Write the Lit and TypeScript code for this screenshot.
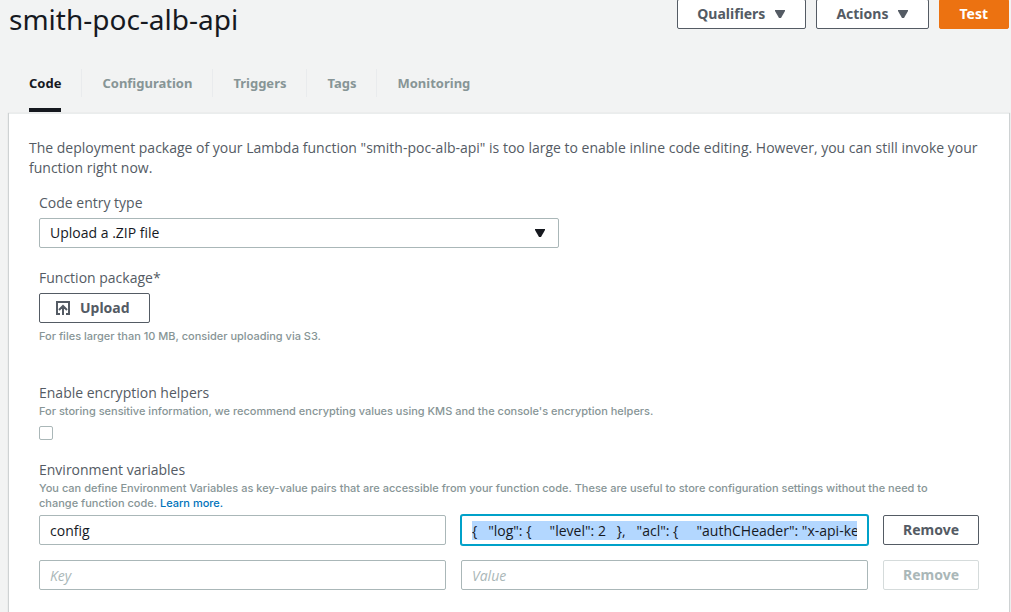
import { LitElement, html, css } from "lit";
import { customElement, state } from "lit/decorators.js";

interface Variable {
  key: string;
  value: string;
}

const caret = html`<svg class="caret" viewBox="0 0 10 8" aria-hidden="true"><path d="M0 0h10v1L6 8H4L0 1z" fill="currentColor"/></svg>`;

@customElement("app-root")
export class AppRoot extends LitElement {
  @state() private tabs = ["Code", "Configuration", "Triggers", "Tags", "Monitoring"];
  @state() private current = "Code";
  @state() private variables: Variable[] = [
    {
      key: "config",
      value: '{   "log": {     "level": 2   },   "acl": {     "authCHeader": "x-api-key"   } }',
    },
    { key: "", value: "" },
  ];

  static styles = css`
    :host {
      display: flex;
      flex-direction: column;
      min-height: 100vh;
      overflow: hidden;
      background: #f2f3f3;
      color: #545b64;
      font: 14px/20px "Open Sans", "Noto Sans", sans-serif;
    }
    * { box-sizing: border-box; }
    header {
      display: flex;
      justify-content: space-between;
      align-items: center;
      margin-top: -1px;
      padding: 0 2px 0 9px;
    }
    h1 {
      margin: 0;
      font: 400 28px/40px "Noto Sans", sans-serif;
      color: #16191f;
    }
    .actions { display: flex; gap: 10px; align-self: flex-start; }
    button {
      font: 700 14px/20px "Noto Sans", sans-serif;
      height: 30px;
      padding: 0 19px;
      border: 1px solid #545b64;
      border-radius: 2px;
      background: #fff;
      color: #545b64;
      display: inline-flex;
      align-items: center;
      justify-content: center;
      gap: 10px;
      white-space: nowrap;
    }
    .actions button { padding: 0 20px 0 19px; }
    button.primary { background: #ec7211; border-color: #ec7211; color: #fff; }
    button:disabled { color: #aab7b8; border-color: #d5dbdb; }
    .caret { width: 10px; height: 8px; }
    nav {
      display: flex;
      margin-top: 30px;
      padding: 0 9px;
      font: 700 13px/20px "Noto Sans", sans-serif;
    }
    .tab { height: 43px; display: flex; }
    .tab a {
      margin: 0 20px;
      padding-top: 4px;
      color: #879596;
      text-decoration: none;
      border-bottom: 4px solid transparent;
    }
    .tab + .tab::before { content: ""; width: 1px; height: 28px; background: #e9ebed; }
    .tab a.on { color: #16191f; border-color: #16191f; }
    main {
      flex: 1;
      margin: 2px 2px 0 9px;
      padding: 24px 20px;
      background: #fff;
      box-shadow: 0 -1px 0 #eaeded, 0 0 1px 1px rgba(0, 28, 36, 0.15);
    }
    p { margin: 0; }
    form { padding: 15px 10px; display: flex; flex-direction: column; }
    label, .label { display: block; }
    .field { display: flex; flex-direction: column; align-items: flex-start; }
    .hint {
      max-width: 930px;
      padding-top: 1px;
      margin-bottom: -1px;
      font: 500 11px/15px Inter, "Noto Sans", sans-serif;
      color: #879596;
    }
    .hint a { color: #0073bb; text-decoration: none; }
    .pick { display: grid; width: 100%; max-width: 520px; align-items: center; margin: 5px 0 20px; }
    .pick > * { grid-area: 1 / 1; }
    .pick .caret { justify-self: end; margin-right: 14px; color: #16191f; pointer-events: none; }
    select, input {
      font: inherit;
      color: #16191f;
      background: #fff;
      border: 1px solid #aab7b8;
      border-radius: 2px;
      appearance: none;
      margin: 0;
      outline: none;
      width: 100%;
      height: 30px;
      padding: 0 10px;
    }
    .upload { margin: 5px 0; padding: 0 19px 0 16px; }
    .upload svg { width: 14px; height: 14px; }
    .encryption { margin-top: 40px; }
    input[type="checkbox"] { width: 14px; height: 14px; padding: 0; margin-top: 8px; }
    input[type="checkbox"]:checked { background: #0073bb; }
    .env { margin-top: 20px; }
    .rows { width: 100%; margin-top: 5px; display: grid; gap: 15px; }
    .row { display: grid; grid-template-columns: 1fr 1fr 96px; gap: 15px; }
    .row button { padding: 0; }
    input:focus { border-color: #00a1c9; box-shadow: 0 0 0 1px #00a1c9; }
    input::placeholder { color: #aab7b8; font-style: italic; opacity: 1; }
    input::selection { background: #b3d7ff; color: #16191f; }
  `;

  firstUpdated() {
    const field = this.renderRoot.querySelector<HTMLInputElement>("#value-0");
    if (!field) return;
    field.focus();
    field.setSelectionRange(0, field.value.length, "backward");
    field.scrollLeft = 0;
    requestAnimationFrame(() => (field.scrollLeft = 0));
  }

  render() {
    return html`
      <header>
        <h1>smith-poc-alb-api</h1>
        <div class="actions">
          <button>Qualifiers ${caret}</button>
          <button>Actions ${caret}</button>
          <button class="primary">Test</button>
        </div>
      </header>
      <nav>
        ${this.tabs.map(
          (tab) => html`<div class="tab"><a href="#${tab}" class=${tab === this.current ? "on" : ""} @click=${() => (this.current = tab)}>${tab}</a></div>`
        )}
      </nav>
      <main>
        <p>The deployment package of your Lambda function "smith-poc-alb-api" is too large to enable inline code editing. However, you can still invoke your function right now.</p>
        <form @submit=${(e: Event) => e.preventDefault()}>
          <div class="field">
            <label for="entry">Code entry type</label>
            <div class="pick">
              <select id="entry"><option>Upload a .ZIP file</option></select>
              ${caret}
            </div>
          </div>
          <div class="field">
            <label for="upload">Function package*</label>
            <button id="upload" type="button" class="upload">
              <svg viewBox="0 0 14 14" fill="none" stroke="currentColor" stroke-width="2" aria-hidden="true">
                <path d="M4 13H1V1h12v12h-3M7 14V5M3 9l4-4 4 4" />
              </svg>
              Upload
            </button>
            <p class="hint">For files larger than 10 MB, consider uploading via S3.</p>
          </div>
          <div class="field encryption">
            <label for="helpers">Enable encryption helpers</label>
            <p class="hint">For storing sensitive information, we recommend encrypting values using KMS and the console's encryption helpers.</p>
            <input id="helpers" type="checkbox" />
          </div>
          <div class="field env">
            <span class="label">Environment variables</span>
            <p class="hint">You can define Environment Variables as key-value pairs that are accessible from your function code. These are useful to store configuration settings without the need to change function code. <a href="#learn">Learn more.</a></p>
            <div class="rows">
              ${this.variables.map(
                (v, i) => html`<div class="row">
                  <input id="key-${i}" aria-label="Key" placeholder="Key" .value=${v.key} />
                  <input id="value-${i}" aria-label="Value" placeholder="Value" .value=${v.value} />
                  <button type="button" ?disabled=${!v.key}>Remove</button>
                </div>`
              )}
            </div>
          </div>
        </form>
      </main>
    `;
  }
}
